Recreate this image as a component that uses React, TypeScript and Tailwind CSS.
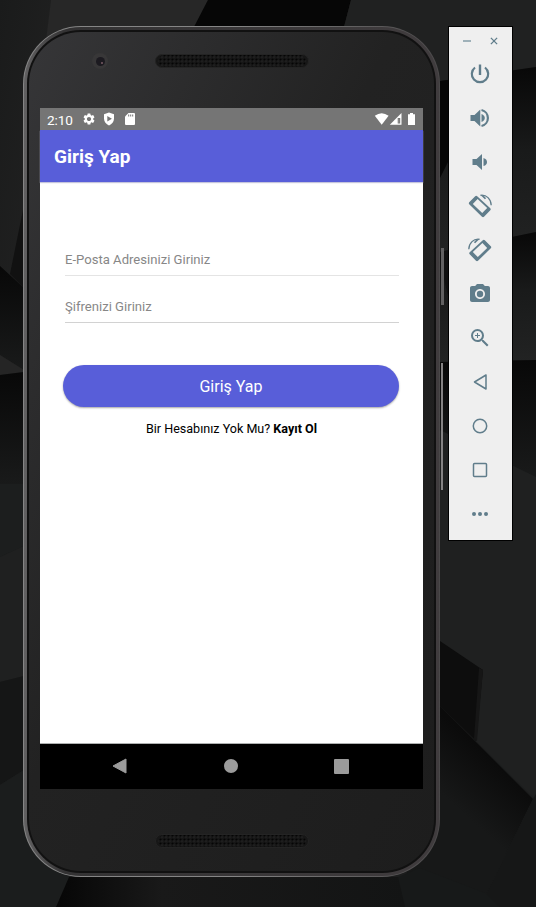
import type { ReactNode } from "react";
import { MdPhotoCamera, MdSettings, MdZoomIn } from "react-icons/md";

/* Faceted dark wallpaper behind the emulator */
function Wallpaper() {
  return (
    <svg className="absolute inset-0" width="536" height="907" viewBox="0 0 536 907">
      <defs>
        <linearGradient id="dn" x1="0" y1="0" x2="0" y2="1">
          <stop offset="0" stopColor="#080808" />
          <stop offset="0.45" stopColor="#191a1a" />
          <stop offset="1" stopColor="#222323" />
        </linearGradient>
        <linearGradient id="lf" x1="0" y1="0" x2="0" y2="1">
          <stop offset="0" stopColor="#080808" />
          <stop offset="1" stopColor="#191a1a" />
        </linearGradient>
        <linearGradient id="up" x1="0" y1="0" x2="1" y2="1">
          <stop offset="0" stopColor="#1a1b1b" />
          <stop offset="1" stopColor="#222222" />
        </linearGradient>
        <linearGradient id="rt" x1="0" y1="0" x2="1" y2="0">
          <stop offset="0" stopColor="#060606" />
          <stop offset="0.3" stopColor="#191919" />
          <stop offset="1" stopColor="#131414" />
        </linearGradient>
        <linearGradient id="slope" gradientUnits="userSpaceOnUse" x1="505" y1="770" x2="465" y2="815">
          <stop offset="0" stopColor="#0b0b0b" />
          <stop offset="1" stopColor="#171818" />
        </linearGradient>
      </defs>
      <rect width="536" height="907" fill="#1c1d1d" />
      <polygon points="0,0 51,0 38,120 24,210 24,288 0,266" fill="url(#up)" />
      <polygon points="24,205 10,274 24,288" fill="#111111" />
      <polygon points="51,0 208,0 194,27 194,120 36,120" fill="#272727" />
      <polygon points="208,0 351,0 344,27 194,27" fill="#060606" />
      <polygon points="351,0 536,0 536,67 440,82 344,60 344,27" fill="#202121" />
      <polygon points="440,81 536,67 536,232 440,252" fill="url(#dn)" />
      <polygon points="440,81 449,80 449,160 440,178" fill="#060606" />
      <polygon points="440,252 536,232 536,360 440,362" fill="url(#dn)" />
      <polygon points="440,252 449,250 449,300 440,262" fill="#101010" />
      <polygon points="440,362 536,360 536,477 440,440" fill="url(#lf)" />
      <polygon points="0,266 24,288 24,370 0,355" fill="url(#lf)" />
      <polygon points="0,355 24,370 24,372 0,375" fill="#252525" />
      <polygon points="0,375 24,372 24,484 0,484" fill="url(#lf)" />
      <polygon points="0,484 24,484 24,546 0,557" fill="#1c1e1e" />
      <polygon points="0,557 24,546 24,676 0,682" fill="#1f2020" />
      <polygon points="0,682 24,676 24,770 0,785" fill="#151616" />
      <polygon points="0,785 24,770 70,877 56,907 0,907" fill="#1b1d1d" />
      <polygon points="440,430 536,477 536,800 476,741 440,705" fill="#1f2020" />
      <polygon points="440,641 483,670 476,741 440,706" fill="#0d0d0d" />
      <polygon points="479,668 483,670 477,741 474,739" fill="#161616" />
      <polygon points="440,706 533,799 480,907 400,907" fill="url(#slope)" />
      <polygon points="533,799 536,794 536,907 480,907" fill="#161717" />
      <polygon points="69,877 400,877 408,907 56,907" fill="url(#rt)" />
      <polygon points="398,877 420,868 485,893 500,907 405,907" fill="#171919" />
    </svg>
  );
}

function Speaker() {
  return (
    <svg width="154" height="14" viewBox="0 0 154 14" className="block">
      <defs>
        <pattern id="mesh" width="4" height="4" patternUnits="userSpaceOnUse">
          <circle cx="1.5" cy="1.5" r="1.1" fill="#050505" />
          <circle cx="3" cy="3" r="0.6" fill="#303030" />
        </pattern>
      </defs>
      <rect x="0.5" y="0.5" width="153" height="13" rx="6.5" fill="#171717" stroke="#242424" />
      <rect x="3" y="1" width="148" height="12" rx="6" fill="url(#mesh)" />
    </svg>
  );
}

function StatusBar() {
  return (
    <div className="flex h-[22px] items-center bg-[#757575] pl-[7px] pr-[7px] text-white">
      <span className="w-[35px] pt-px text-[13.6px] leading-[22px] tracking-[-0.1px]">2:10</span>
      <MdSettings size={14} />
      <svg className="ml-[7px]" width="12" height="14" viewBox="0 0 12 14">
        <path d="M6 .5 11 2.3V6.5C11 9.8 8.9 12.3 6 13.4 3.1 12.3 1 9.8 1 6.5V2.3Z" fill="#fff" />
        <path d="M4.300 4 8.900 6.700 4.300 9.400Z" fill="#757575" />
      </svg>
      <svg className="ml-[10px]" width="10" height="12" viewBox="0 0 10 12">
        <path d="M3.500 0H9a1 1 0 0 1 1 1v10a1 1 0 0 1-1 1H1a1 1 0 0 1-1-1V3.500Z" fill="#fff" />
        <path d="M3.700 1.500v2M5.700 1.500v2M7.700 1.500v2" stroke="#757575" strokeWidth="1" />
      </svg>
      <svg className="ml-auto" width="42" height="14" viewBox="0 0 42 14">
        <path d="M.8 3.800Q7.700-1.400 14.600 3.800L7.700 12.800Z" fill="#fff" />
        <path d="M27.500 1V12.700H15.800Z" fill="#fff" />
        <path d="M23.700 6h2.500v5.500h-2.500Z" fill="#757575" />
        <path d="M24.800 6.500v4.500" stroke="#a5a5a5" strokeWidth=".6" />
        <path d="M36 1h3v1.300H41V13H34V2.300h2Z" fill="#fff" />
      </svg>
    </div>
  );
}

function Field({ label, line }: { label: string; line: string }) {
  return (
    <div className={`flex h-[47px] items-center border-b pt-[15px] text-[13.1px] text-[#878787] ${line}`}>
      {label}
    </div>
  );
}

function Screen() {
  return (
    <div className="flex h-[681px] w-[383px] flex-col bg-white">
      <StatusBar />
      <header className="flex h-[52px] items-center bg-[#585ed9] pl-[14px] pt-[3px] text-[19px] font-bold text-white shadow-[0_1px_1px_#c5c5dc]">
        Giriş Yap
      </header>
      <main className="flex flex-1 flex-col pl-[23px] pr-[24px] pt-[47px]">
        <div className="pl-[2px]">
          <Field label="E-Posta Adresinizi Giriniz" line="border-[#e4e4e4]" />
          <Field label="Şifrenizi Giriniz" line="border-[#d2d2d2]" />
        </div>
        <button className="mt-[42px] h-[42px] w-full rounded-full bg-[#585ed9] pt-[1px] text-[16px] text-white shadow-[0_1px_2px_rgba(0,0,0,0.35)]">
          Giriş Yap
        </button>
        <p className="mt-[13px] pl-px text-center text-[12.55px] leading-[18px] text-black">
          Bir Hesabınız Yok Mu? <span className="font-bold">Kayıt Ol</span>
        </p>
      </main>
      <nav className="flex h-[46px] items-center justify-between border-t border-[#aeb0b0] bg-black pb-px pl-[72px] pr-[74px]">
        <svg width="15" height="16" viewBox="0 0 15 16">
          <path d="M14 1v14L1 8Z" fill="#9b9b9b" stroke="#9b9b9b" strokeLinejoin="round" />
        </svg>
        <div className="size-[14px] rounded-full bg-[#9b9b9b]" />
        <div className="size-[15px] rounded-[1px] bg-[#9b9b9b]" />
      </nav>
    </div>
  );
}

function Phone() {
  return (
    <div className="h-[851px] w-[417px] rounded-[58px] bg-linear-to-r from-[#858585] via-[#868686] to-[#4a4849] p-px">
      <div className="h-full rounded-[57px] bg-linear-to-r from-[#626162] via-[#333233] via-10% to-[#403c3e] p-[3px]">
        <div className="h-full rounded-[54px] bg-[#111111] p-[2px]">
          <div className="flex h-full flex-col items-center rounded-[52px] bg-linear-to-br from-[#363638] via-[#222222] via-45% to-[#1d1d1d]">
            <div className="relative flex h-[76px] w-full shrink-0 justify-center pt-[22px]">
              <div className="absolute left-[63px] top-[21px] flex size-[16px] items-center justify-center rounded-full bg-[#383738]">
                <div className="flex size-[9px] items-end justify-end rounded-full bg-[#1c1a20] p-[2px]">
                  <div className="size-[2px] rounded-full bg-[#785b64]" />
                </div>
              </div>
              <Speaker />
            </div>
            <Screen />
            <div className="mt-[45px]">
              <Speaker />
            </div>
          </div>
        </div>
      </div>
    </div>
  );
}

function Rotate({ mirrored = false }: { mirrored?: boolean }) {
  return (
    <svg width="24" height="24" viewBox="0 0 24 24" className={mirrored ? "-scale-x-100" : ""}>
      <path
        fillRule="evenodd"
        d="M7.2 2.2Q8.200 1.200 9.200 2.200L22.300 14.300Q23.300 15.300 22.300 16.300L16 22.800Q15 23.700 14 22.800L1.200 10.300Q.3 9.300 1.200 8.300ZM9.600 4.900 4.800 9.900 14.200 19.100 19.200 14.100Z"
        fill="currentColor"
      />
      <path d="M12.500 1.300C18.500.5 23 5 23.200 11.200" fill="none" stroke="currentColor" strokeWidth="1.300" />
      <path d="M12.200.8 16.900 5.200 18.100 4.200 15.500 1.500Z" fill="currentColor" />
    </svg>
  );
}

function Glyph({ children }: { children: ReactNode }) {
  return (
    <svg width="24" height="24" viewBox="0 0 24 24" fill="none" stroke="currentColor">
      {children}
    </svg>
  );
}

function Toolbar() {
  const tools: ReactNode[] = [
    <Glyph>
      <path d="M12 2.500v10.500" strokeWidth="2.400" />
      <path d="M7 5.500a8.200 8.200 0 1 0 10 0" strokeWidth="2.200" />
    </Glyph>,
    <Glyph>
      <path d="M2.500 9H6.500L12.300 3.400V20.600L6.500 15H2.500Z" fill="currentColor" stroke="none" />
      <path d="M13.500 8q3.300 1.300 3.300 4t-3.300 4Z" fill="currentColor" stroke="none" />
      <path d="M13.500 4a8.200 8.200 0 0 1 0 16" strokeWidth="2.200" />
    </Glyph>,
    <Glyph>
      <path d="M4.500 9H8.500L14 4V20L8.500 15H4.500Z" fill="currentColor" stroke="none" />
      <path d="M15.500 8q3.500 1 3.500 4t-3.500 4Z" fill="currentColor" stroke="none" />
    </Glyph>,
    <Rotate />,
    <Rotate mirrored />,
    <MdPhotoCamera size={24} />,
    <MdZoomIn size={24} />,
    <Glyph>
      <path d="M18 5V19L6.500 12Z" strokeWidth="1.500" strokeLinejoin="round" />
    </Glyph>,
    <Glyph>
      <circle cx="12" cy="12" r="6.700" strokeWidth="1.500" />
    </Glyph>,
    <Glyph>
      <rect x="5.500" y="5.500" width="13" height="13" rx="1" strokeWidth="1.500" />
    </Glyph>,
    <Glyph>
      <path d="M6 12h.01M12 12h.01M18 12h.01" strokeWidth="4" strokeLinecap="round" />
    </Glyph>,
  ];
  return (
    <aside className="h-[515px] w-[65px] border border-black bg-[#efefef] text-[#607d8b]">
      <div className="flex h-[25px] items-center justify-between pl-[14px] pr-[14px] pt-[3px]">
        <div className="h-[2px] w-[8px] bg-[#9fb1b9]" />
        <svg width="8" height="8" viewBox="0 0 9 9" stroke="currentColor" strokeWidth="1.500">
          <path d="M1 1 8 8M8 1 1 8" />
        </svg>
      </div>
      {tools.map((tool, i) => (
        <div key={i} className="flex h-[44px] items-center justify-center pr-px">
          {tool}
        </div>
      ))}
    </aside>
  );
}

export default function App() {
  return (
    <div className="relative h-[907px] w-[536px] overflow-hidden bg-[#1c1d1d] font-[Roboto,sans-serif]">
      <Wallpaper />
      <div className="relative flex items-start pl-[23px] pt-[26px]">
        <div className="relative">
          <Phone />
          <div className="absolute -right-[4px] top-[222px] h-[57px] w-[3px] bg-[#626162]" />
          <div className="absolute -right-[3px] top-[337px] h-[127px] w-[2px] bg-[#858384]" />
        </div>
        <div className="ml-[8px]">
          <Toolbar />
        </div>
      </div>
    </div>
  );
}
